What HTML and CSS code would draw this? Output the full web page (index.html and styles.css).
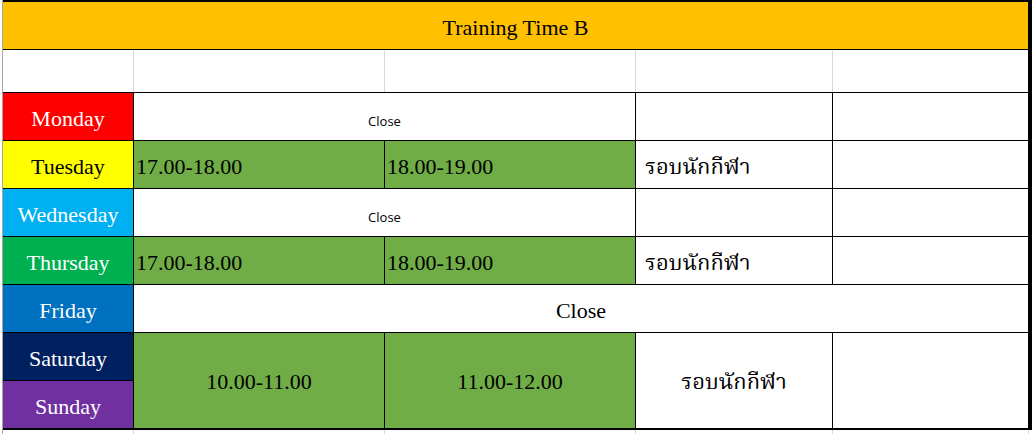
FILE: index.html
```html
<!DOCTYPE html>
<html lang="th">
<head>
<meta charset="utf-8">
<title>Training Time B</title>
<link rel="stylesheet" href="styles.css">
</head>
<body>
<div class="sheet">
  <div class="grid">
    <div class="cell title span5">Training Time B</div>
    <div class="blank span5">
      <div></div><div></div><div></div><div></div><div></div>
    </div>

    <div class="cell day mon">Monday</div>
    <div class="cell span2 small">Close</div>
    <div class="cell"></div>
    <div class="cell"></div>

    <div class="cell day tue">Tuesday</div>
    <div class="cell green left">17.00-18.00</div>
    <div class="cell green left">18.00-19.00</div>
    <div class="cell left thai">รอบนักกีฬา</div>
    <div class="cell"></div>

    <div class="cell day wed">Wednesday</div>
    <div class="cell span2 small">Close</div>
    <div class="cell"></div>
    <div class="cell"></div>

    <div class="cell day thu">Thursday</div>
    <div class="cell green left">17.00-18.00</div>
    <div class="cell green left">18.00-19.00</div>
    <div class="cell left thai">รอบนักกีฬา</div>
    <div class="cell"></div>

    <div class="cell day fri">Friday</div>
    <div class="cell span4">Close</div>

    <div class="cell day sat">Saturday</div>
    <div class="cell green tall">10.00-11.00</div>
    <div class="cell green tall">11.00-12.00</div>
    <div class="cell tall thai-c">รอบนักกีฬา</div>
    <div class="cell tall"></div>
    <div class="cell day sun">Sunday</div>
  </div>
  <div class="below">
    <div></div><div></div><div></div><div></div><div></div>
  </div>
</div>
</body>
</html>
```

FILE: styles.css
```css
html, body {
  margin: 0;
  padding: 0;
  background: #ffffff;
}

.sheet {
  margin-left: 2px;
  border-left: 1px solid #a6a6a6;
  height: 434px;
  width: 1031px;
  box-sizing: border-box;
}

.grid {
  display: grid;
  grid-template-columns: 130px 250px 250px 196px 195px;
  grid-template-rows: 47px 42px repeat(7, 47px);
  gap: 1px;
  width: 1029px;
  box-sizing: border-box;
  padding: 2px 2px 2px 0;
  background: #000000;
  font-family: "Liberation Serif", "Times New Roman", "Noto Serif Thai", "Norasi", "Laksaman", serif;
  font-size: 22px;
  color: #000000;
}

.cell {
  background: #ffffff;
  display: flex;
  align-items: flex-end;
  justify-content: center;
  padding-bottom: 10px;
  line-height: 22px;
  box-sizing: border-box;
  white-space: nowrap;
}

.span2 { grid-column: span 2; }
.span4 { grid-column: span 4; }
.span5 { grid-column: span 5; }

.title {
  background: #ffc000;
}

.blank {
  display: grid;
  grid-template-columns: 130px 250px 250px 196px 195px;
  gap: 1px;
  background: #d9d9d9;
}
.blank div {
  background: #ffffff;
}

.day { color: #ffffff; }
.mon { background: #ff0000; }
.tue { background: #ffff00; color: #000000; }
.wed { background: #00b0f0; }
.thu { background: #00b050; }
.fri { background: #0070c0; }
.sat { background: #002060; }
.sun { background: #7030a0; }

.green { background: #70ad47; }

.left {
  justify-content: flex-start;
  padding-left: 2px;
}

.thai {
  padding-left: 9px;
}

.small {
  font-family: "Open Sans", "Noto Sans", sans-serif;
  font-size: 13px;
  line-height: 13px;
  padding-bottom: 12px;
}

.tall {
  grid-row: span 2;
  align-items: center;
  padding-bottom: 0;
  padding-top: 2px;
}

.below {
  display: grid;
  grid-template-columns: 130px 250px 250px 196px 195px;
  gap: 1px;
  height: 4px;
}
.below div {
  border-right: 1px solid #d9d9d9;
  margin-right: -1px;
}
```
